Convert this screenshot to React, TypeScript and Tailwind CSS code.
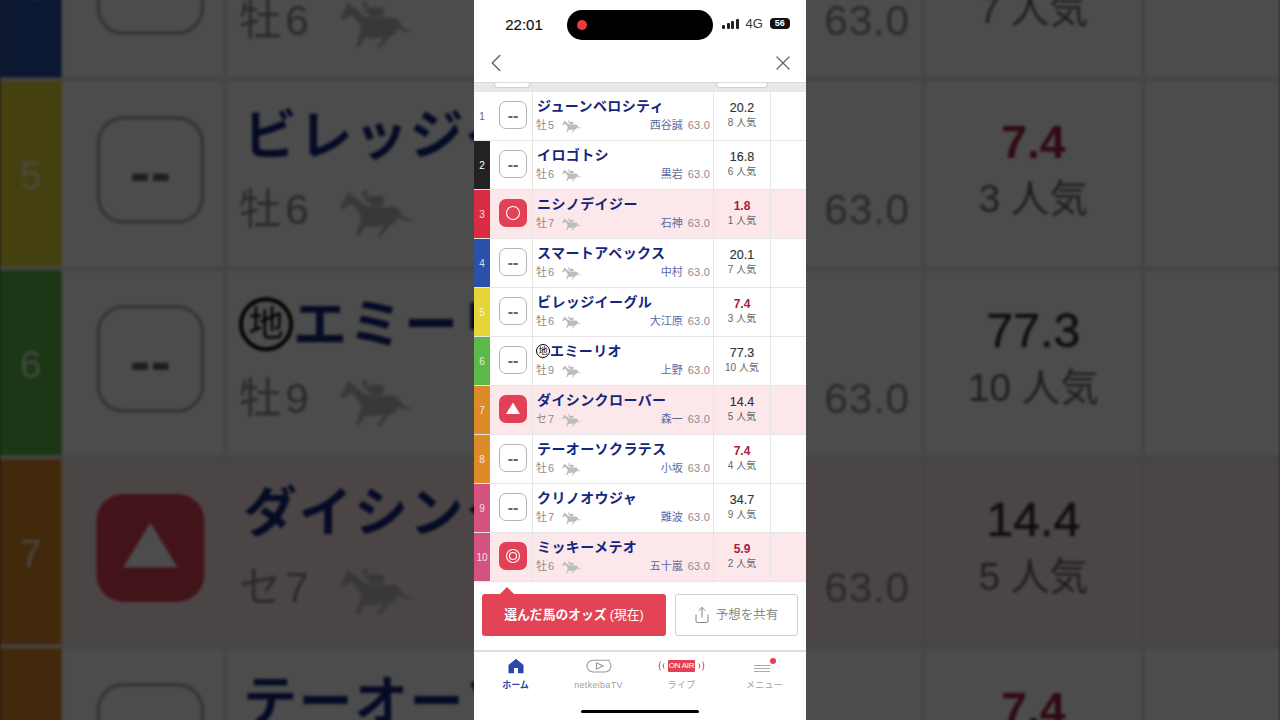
import { ChevronLeft, Share, X } from "lucide-react";

type Horse = {
  no: number;
  color: string;
  numColor: string;
  mark: "none" | "circle" | "triangle" | "double";
  name: string;
  local?: boolean;
  age: string;
  jockey: string;
  odds: string;
  hot?: boolean;
  pop: string;
};

const horses: Horse[] = [
  { no: 1, color: "bg-white", numColor: "text-[#666]", mark: "none", name: "ジューンベロシティ", age: "牡5", jockey: "西谷誠", odds: "20.2", pop: "8 人気" },
  { no: 2, color: "bg-[#222222]", numColor: "text-white", mark: "none", name: "イロゴトシ", age: "牡6", jockey: "黒岩", odds: "16.8", pop: "6 人気" },
  { no: 3, color: "bg-[#d92b42]", numColor: "text-white/80", mark: "circle", name: "ニシノデイジー", age: "牡7", jockey: "石神", odds: "1.8", hot: true, pop: "1 人気" },
  { no: 4, color: "bg-[#2b50a8]", numColor: "text-white/80", mark: "none", name: "スマートアペックス", age: "牡6", jockey: "中村", odds: "20.1", pop: "7 人気" },
  { no: 5, color: "bg-[#e4d538]", numColor: "text-white/80", mark: "none", name: "ビレッジイーグル", age: "牡6", jockey: "大江原", odds: "7.4", hot: true, pop: "3 人気" },
  { no: 6, color: "bg-[#5cb848]", numColor: "text-white/80", mark: "none", name: "エミーリオ", local: true, age: "牡9", jockey: "上野", odds: "77.3", pop: "10 人気" },
  { no: 7, color: "bg-[#dd8a28]", numColor: "text-white/80", mark: "triangle", name: "ダイシンクローバー", age: "セ7", jockey: "森一", odds: "14.4", pop: "5 人気" },
  { no: 8, color: "bg-[#dd8a28]", numColor: "text-white/80", mark: "none", name: "テーオーソクラテス", age: "牡6", jockey: "小坂", odds: "7.4", hot: true, pop: "4 人気" },
  { no: 9, color: "bg-[#d4527f]", numColor: "text-white/80", mark: "none", name: "クリノオウジャ", age: "牡7", jockey: "難波", odds: "34.7", pop: "9 人気" },
  { no: 10, color: "bg-[#d4527f]", numColor: "text-white/80", mark: "double", name: "ミッキーメテオ", age: "牡6", jockey: "五十嵐", odds: "5.9", hot: true, pop: "2 人気" },
];

const picked = [3, 7, 10];

function HorseIcon() {
  return (
    <svg viewBox="20 10 225 145" className="w-[20px] h-[13px] mt-[1px] fill-[#bdbdbd] shrink-0">
      <path d="M46 14 L52 24 C62 28 72 36 84 48 C100 62 130 62 160 60 C180 58 192 62 198 76 C204 90 216 98 240 95 C225 104 205 104 192 90 C190 102 182 110 170 114 C160 122 148 140 136 152 L130 146 C138 134 146 122 148 114 C130 120 118 124 100 118 C92 122 88 128 86 132 C86 138 78 146 72 148 L68 140 C72 134 74 126 76 118 C78 108 84 100 84 90 C78 78 66 62 56 52 C48 56 40 62 30 68 L22 60 C30 50 38 36 40 26 Z" />
      <circle cx="95" cy="22" r="9" />
      <path d="M88 38 C100 30 125 26 145 30 C155 34 152 48 145 58 L112 58 C112 50 100 44 88 38 Z" />
    </svg>
  );
}

function Mark({ kind }: { kind: Horse["mark"] }) {
  if (kind === "none") {
    return (
      <div className="w-[28px] h-[28px] rounded-[7px] border border-[#b5b5b5] bg-white flex items-center justify-center pt-[2px] text-[16px] leading-none font-bold text-[#666]">
        --
      </div>
    );
  }
  return (
    <div className="w-[28px] h-[28px] rounded-[7px] bg-[#e24057] flex items-center justify-center">
      <svg viewBox="0 0 20 20" className="w-[20px] h-[20px] fill-none stroke-white">
        {kind === "circle" && <circle cx="10" cy="10" r="6.5" strokeWidth="1.1" />}
        {kind === "triangle" && <path d="M10 3.5 L17 15 H3 Z" fill="white" stroke="none" />}
        {kind === "double" && (
          <>
            <circle cx="10" cy="10" r="6.5" strokeWidth="1.1" />
            <circle cx="10" cy="10" r="3.5" strokeWidth="1.1" />
          </>
        )}
      </svg>
    </div>
  );
}

function Row({ horse }: { horse: Horse }) {
  const active = picked.includes(horse.no);
  return (
    <div className={`flex h-[49px] border-b border-[#e6e6e6] ${active ? "bg-[#fce8ea]" : "bg-white"}`}>
      <div className={`w-[16px] shrink-0 flex items-center justify-center text-[10px] ${horse.color} ${horse.numColor}`}>
        {horse.no}
      </div>
      <div className="w-[43px] shrink-0 border-r border-[#e6e6e6] pl-[9px] pt-[8.5px]">
        <Mark kind={horse.mark} />
      </div>
      <div className="w-[181px] shrink-0 pl-[3px] pr-[3px] border-r border-[#e6e6e6] flex flex-col">
        <div className="flex items-center h-[15px] mt-[6.5px] pl-[1px] text-[14px] font-semibold tracking-[0.4px] text-[#14267c] whitespace-nowrap">
          {horse.local && (
            <span className="w-[14px] h-[14px] -ml-[1px] rounded-full border border-black text-[9px] tracking-normal leading-none font-normal text-black flex items-center justify-center">
              地
            </span>
          )}
          {horse.name}
        </div>
        <div className="flex items-center h-[14px] mt-[5px] text-[11px] text-[#8c8c8c]">
          <span className="w-[26px] tracking-[1px]">{horse.age}</span>
          <HorseIcon />
          <span className="ml-auto text-[#5a6aa6]">{horse.jockey}</span>
          <span className="ml-[5px] tracking-[0.2px]">63.0</span>
        </div>
      </div>
      <div className="w-[57px] shrink-0 border-r border-[#e6e6e6] flex flex-col items-center pt-[9px]">
        <div className={`leading-[15px] ${horse.hot ? "text-[12px] font-bold text-[#a6203c]" : "text-[12.5px] [-webkit-text-stroke:0.15px] text-[#333]"}`}>
          {horse.odds}
        </div>
        <div className="text-[10px] leading-[14.5px] text-[#666] whitespace-nowrap">{horse.pop}</div>
      </div>
      <div className="flex-1" />
    </div>
  );
}

function Table() {
  return (
    <div className="w-[332px]">
      <div className="flex h-[10px] bg-[#e8e8e8] border-t border-[#d9d9d9] overflow-hidden">
        <div className="ml-[20px] w-[36px] h-[5px] rounded-b-[4px] bg-white border border-t-0 border-[#cfcfcf]" />
        <div className="ml-[186px] w-[52px] h-[5px] rounded-b-[4px] bg-white border border-t-0 border-[#cfcfcf]" />
      </div>
      {horses.map((h) => (
        <Row key={h.no} horse={h} />
      ))}
    </div>
  );
}

function StatusBar() {
  return (
    <div className="h-[45px] shrink-0 flex items-start">
      <div className="w-[93px] pt-[16px] text-center pl-[7px] text-[15px] leading-[18px] [-webkit-text-stroke:0.2px] text-[#111]">22:01</div>
      <div className="w-[146px] h-[30px] mt-[10px] rounded-full bg-black flex items-center pl-[10px]">
        <div className="w-[10px] h-[10px] rounded-full bg-[#ee3b3b]" />
      </div>
      <div className="flex items-center mt-[17px] ml-[9px]">
        <div className="flex items-end gap-[1.5px] h-[10px]">
          <div className="w-[3px] h-[4px] rounded-[1px] bg-[#222]" />
          <div className="w-[3px] h-[6px] rounded-[1px] bg-[#222]" />
          <div className="w-[3px] h-[8px] rounded-[1px] bg-[#222]" />
          <div className="w-[3px] h-[10px] rounded-[1px] bg-[#222]" />
        </div>
        <span className="ml-[7px] text-[13px] leading-none text-[#333]">4G</span>
        <div className="ml-[7px] w-[20px] h-[11px] rounded-[4px] bg-[#111] text-white text-[9px] font-bold leading-[11px] text-center">56</div>
      </div>
    </div>
  );
}

function HomeIcon() {
  return (
    <svg viewBox="0 0 16 16" className="w-[16px] h-[16px] fill-[#2c48a6]">
      <path d="M8 .8 L15.5 7 V15.2 H10 V10 H6 V15.2 H.5 V7 Z" />
    </svg>
  );
}

function TvIcon() {
  return (
    <svg viewBox="0 0 26 16" className="w-[26px] h-[16px] fill-none stroke-[#999]">
      <path d="M24 2.2 H7 C3.5 2.2 1 5 1 8 C1 11 3.5 14 7 14 H19 C22.5 14 25 11 25 8 C25 6 24 4.5 23 3.6" strokeWidth="1.1" />
      <path d="M10.5 4.8 L17 8 L10.5 11.2 Z" strokeWidth="1.1" />
    </svg>
  );
}

function OnAirIcon() {
  return (
    <div className="h-[16px] flex items-center gap-[2px]">
      <svg viewBox="0 0 8 12" className="w-[8px] h-[12px] fill-none stroke-[#e24057]">
        <path d="M2.5 1.5 C.8 4 .8 8 2.5 10.5 M6 3.5 C5 5 5 7 6 8.5" strokeWidth="1" />
      </svg>
      <div className="w-[27px] h-[12px] bg-[#e24057] rounded-[1px] text-white text-[8px] tracking-[-0.3px] leading-[12px] text-center whitespace-nowrap">ON AIR</div>
      <svg viewBox="0 0 8 12" className="w-[8px] h-[12px] fill-none stroke-[#e24057]">
        <path d="M5.5 1.5 C7.2 4 7.2 8 5.5 10.5 M2 3.5 C3 5 3 7 2 8.5" strokeWidth="1" />
      </svg>
    </div>
  );
}

function MenuIcon() {
  return (
    <div className="relative w-[22px] h-[16px] flex flex-col justify-center gap-[2px] pt-[4px]">
      <div className="h-[1px] w-[16px] bg-[#aaa]" />
      <div className="h-[1px] w-[16px] bg-[#aaa]" />
      <div className="h-[1px] w-[16px] bg-[#aaa]" />
      <div className="absolute right-0 top-0 w-[6px] h-[6px] rounded-full bg-[#e24057]" />
    </div>
  );
}

function Tab({ label, icon, active }: { label: string; icon: React.ReactNode; active?: boolean }) {
  return (
    <div className="flex-1 flex flex-col items-center">
      <div className="h-[16px] flex items-center justify-center">{icon}</div>
      <div className={`mt-[5px] text-[9px] leading-[12px] ${active ? "font-bold text-[#2c48a6]" : "text-[#a3a3a3] tracking-[0.3px]"}`}>{label}</div>
    </div>
  );
}

export default function App() {
  return (
    <div className="relative w-[1280px] h-[720px] overflow-hidden bg-[#4d4d4d] flex justify-center font-['Liberation_Sans','Noto_Sans_CJK_JP',sans-serif]">
      {/* enlarged, darkened copy of the list behind the phone */}
      <div className="absolute inset-0 overflow-hidden">
        <div className="mt-[-713px] w-[332px] origin-top-left scale-[3.856] blur-[0.4px]">
          <Table />
        </div>
        <div className="absolute inset-0 bg-black/70" />
      </div>

      <div className="relative w-[332px] h-[720px] bg-white flex flex-col">
        <StatusBar />
        <div className="h-[37px] shrink-0 flex items-center justify-between pl-[7px] pr-[11px] pb-[1px]">
          <ChevronLeft className="w-[30px] h-[30px] text-[#666]" strokeWidth={1.2} />
          <X className="w-[24px] h-[24px] text-[#666]" strokeWidth={1.3} />
        </div>
        <Table />

        <div className="relative h-[68px] shrink-0 flex gap-[9px] pl-[8px] pt-[12px]">
          <div className="absolute left-[26px] top-[5px] w-0 h-0 border-x-[7px] border-x-transparent border-b-[7px] border-b-[#e34455]" />
          <div className="w-[184px] h-[42px] rounded-[3px] bg-[#e34455] flex items-center justify-center text-white text-[12.8px] font-semibold">
            選んだ馬のオッズ<span className="font-normal ml-[3px]">(現在)</span>
          </div>
          <div className="w-[123px] h-[42px] rounded-[3px] border border-[#cfcfcf] flex items-center justify-center gap-[5px] pr-[2px] text-[#8a8a8a] text-[12.5px]">
            <Share className="w-[18px] h-[18px] text-[#777]" strokeWidth={1.2} />
            予想を共有
          </div>
        </div>

        <div className="flex-1 border-t-2 border-[#dedede] flex flex-col">
          <div className="flex pt-[6px]">
            <Tab label="ホーム" icon={<HomeIcon />} active />
            <Tab label="netkeibaTV" icon={<TvIcon />} />
            <Tab label="ライブ" icon={<OnAirIcon />} />
            <Tab label="メニュー" icon={<MenuIcon />} />
          </div>
          <div className="mt-auto mb-[7px] mx-auto w-[118px] h-[3px] rounded-full bg-black" />
        </div>
      </div>
    </div>
  );
}
